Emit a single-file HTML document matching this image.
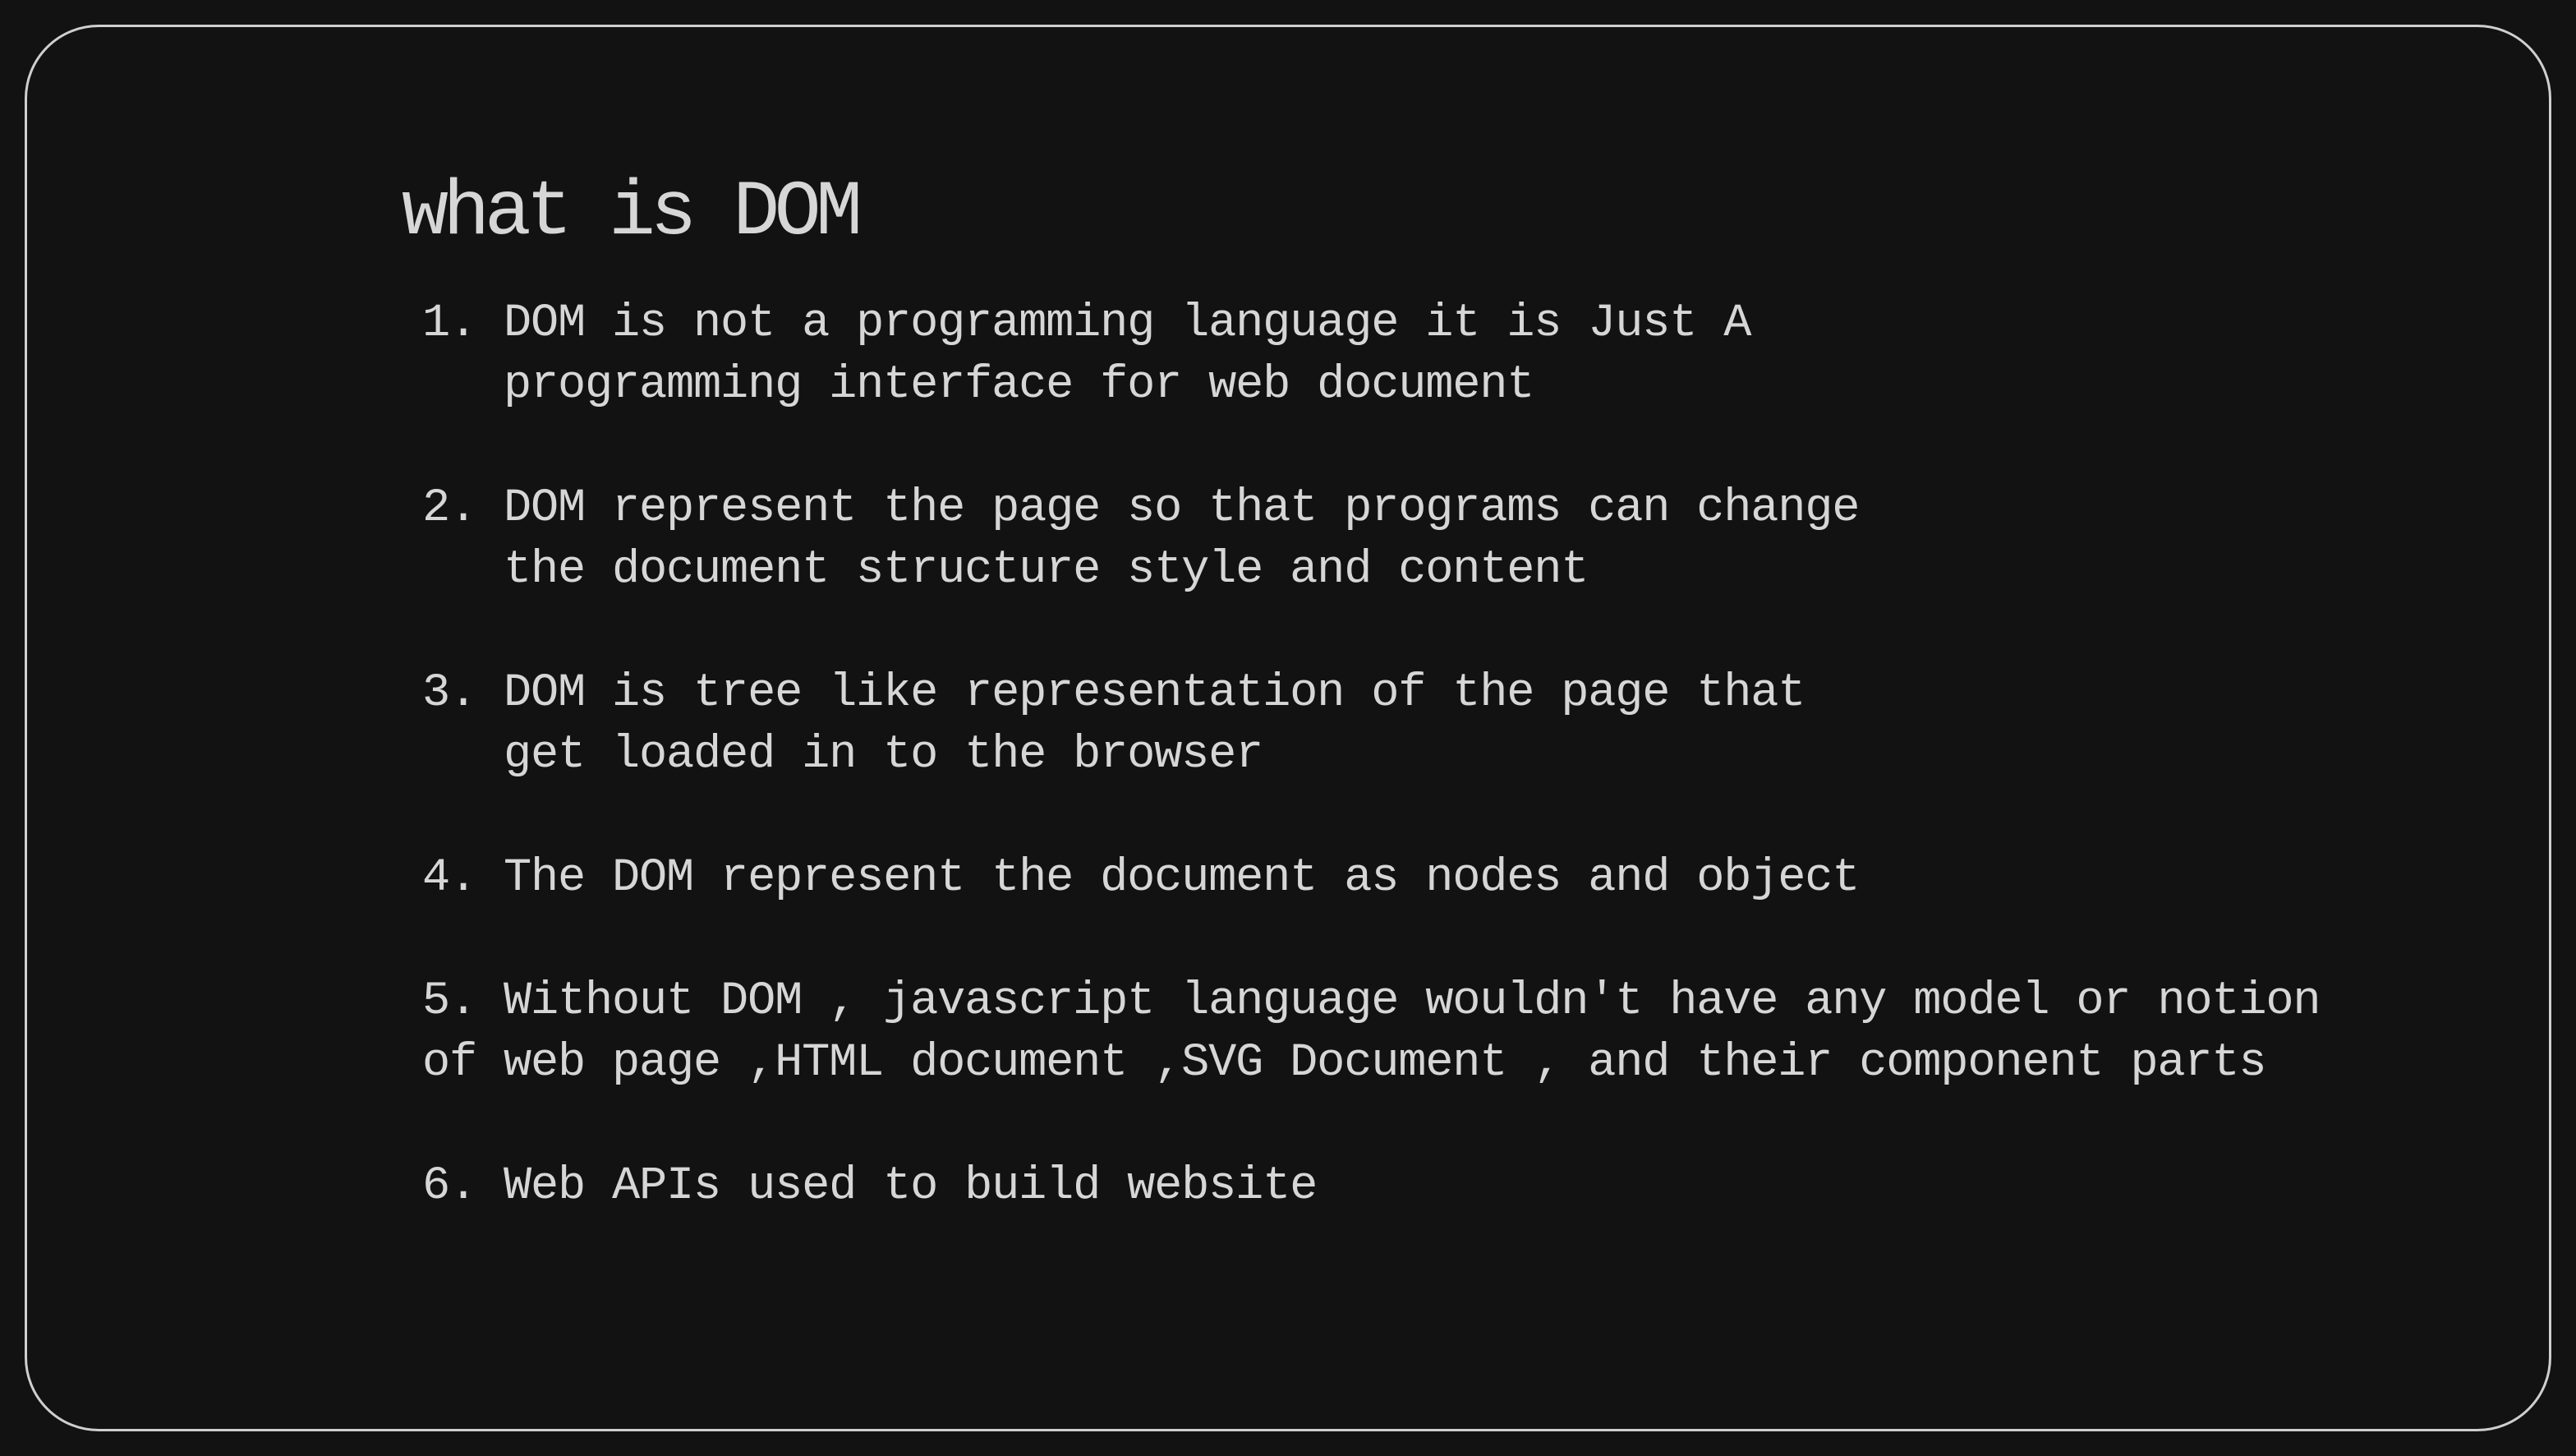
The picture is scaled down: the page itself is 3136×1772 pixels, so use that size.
<!DOCTYPE html>
<html><head><meta charset="utf-8"><style>
html,body{margin:0;padding:0;background:#121212;width:3136px;height:1772px;overflow:hidden}
.box{position:absolute;left:30px;top:30px;width:3070px;height:1706px;border:3px solid #cfcfcf;border-radius:90px}
.t{position:absolute;left:489px;top:206px;font-family:"Liberation Mono",monospace;font-size:95px;line-height:107px;letter-spacing:-6.6px;color:#d6d6d6;white-space:pre}
.b{position:absolute;left:514px;top:357px;font-family:"Liberation Mono",monospace;font-size:57px;line-height:75px;letter-spacing:-1.2px;color:#d6d6d6;white-space:pre}
</style></head><body>
<div class="box"></div>
<div class="t">what is DOM</div>
<div class="b">1. DOM is not a programming language it is Just A
   programming interface for web document

2. DOM represent the page so that programs can change
   the document structure style and content

3. DOM is tree like representation of the page that
   get loaded in to the browser

4. The DOM represent the document as nodes and object

5. Without DOM , javascript language wouldn't have any model or notion
of web page ,HTML document ,SVG Document , and their component parts

6. Web APIs used to build website</div>
</body></html>
